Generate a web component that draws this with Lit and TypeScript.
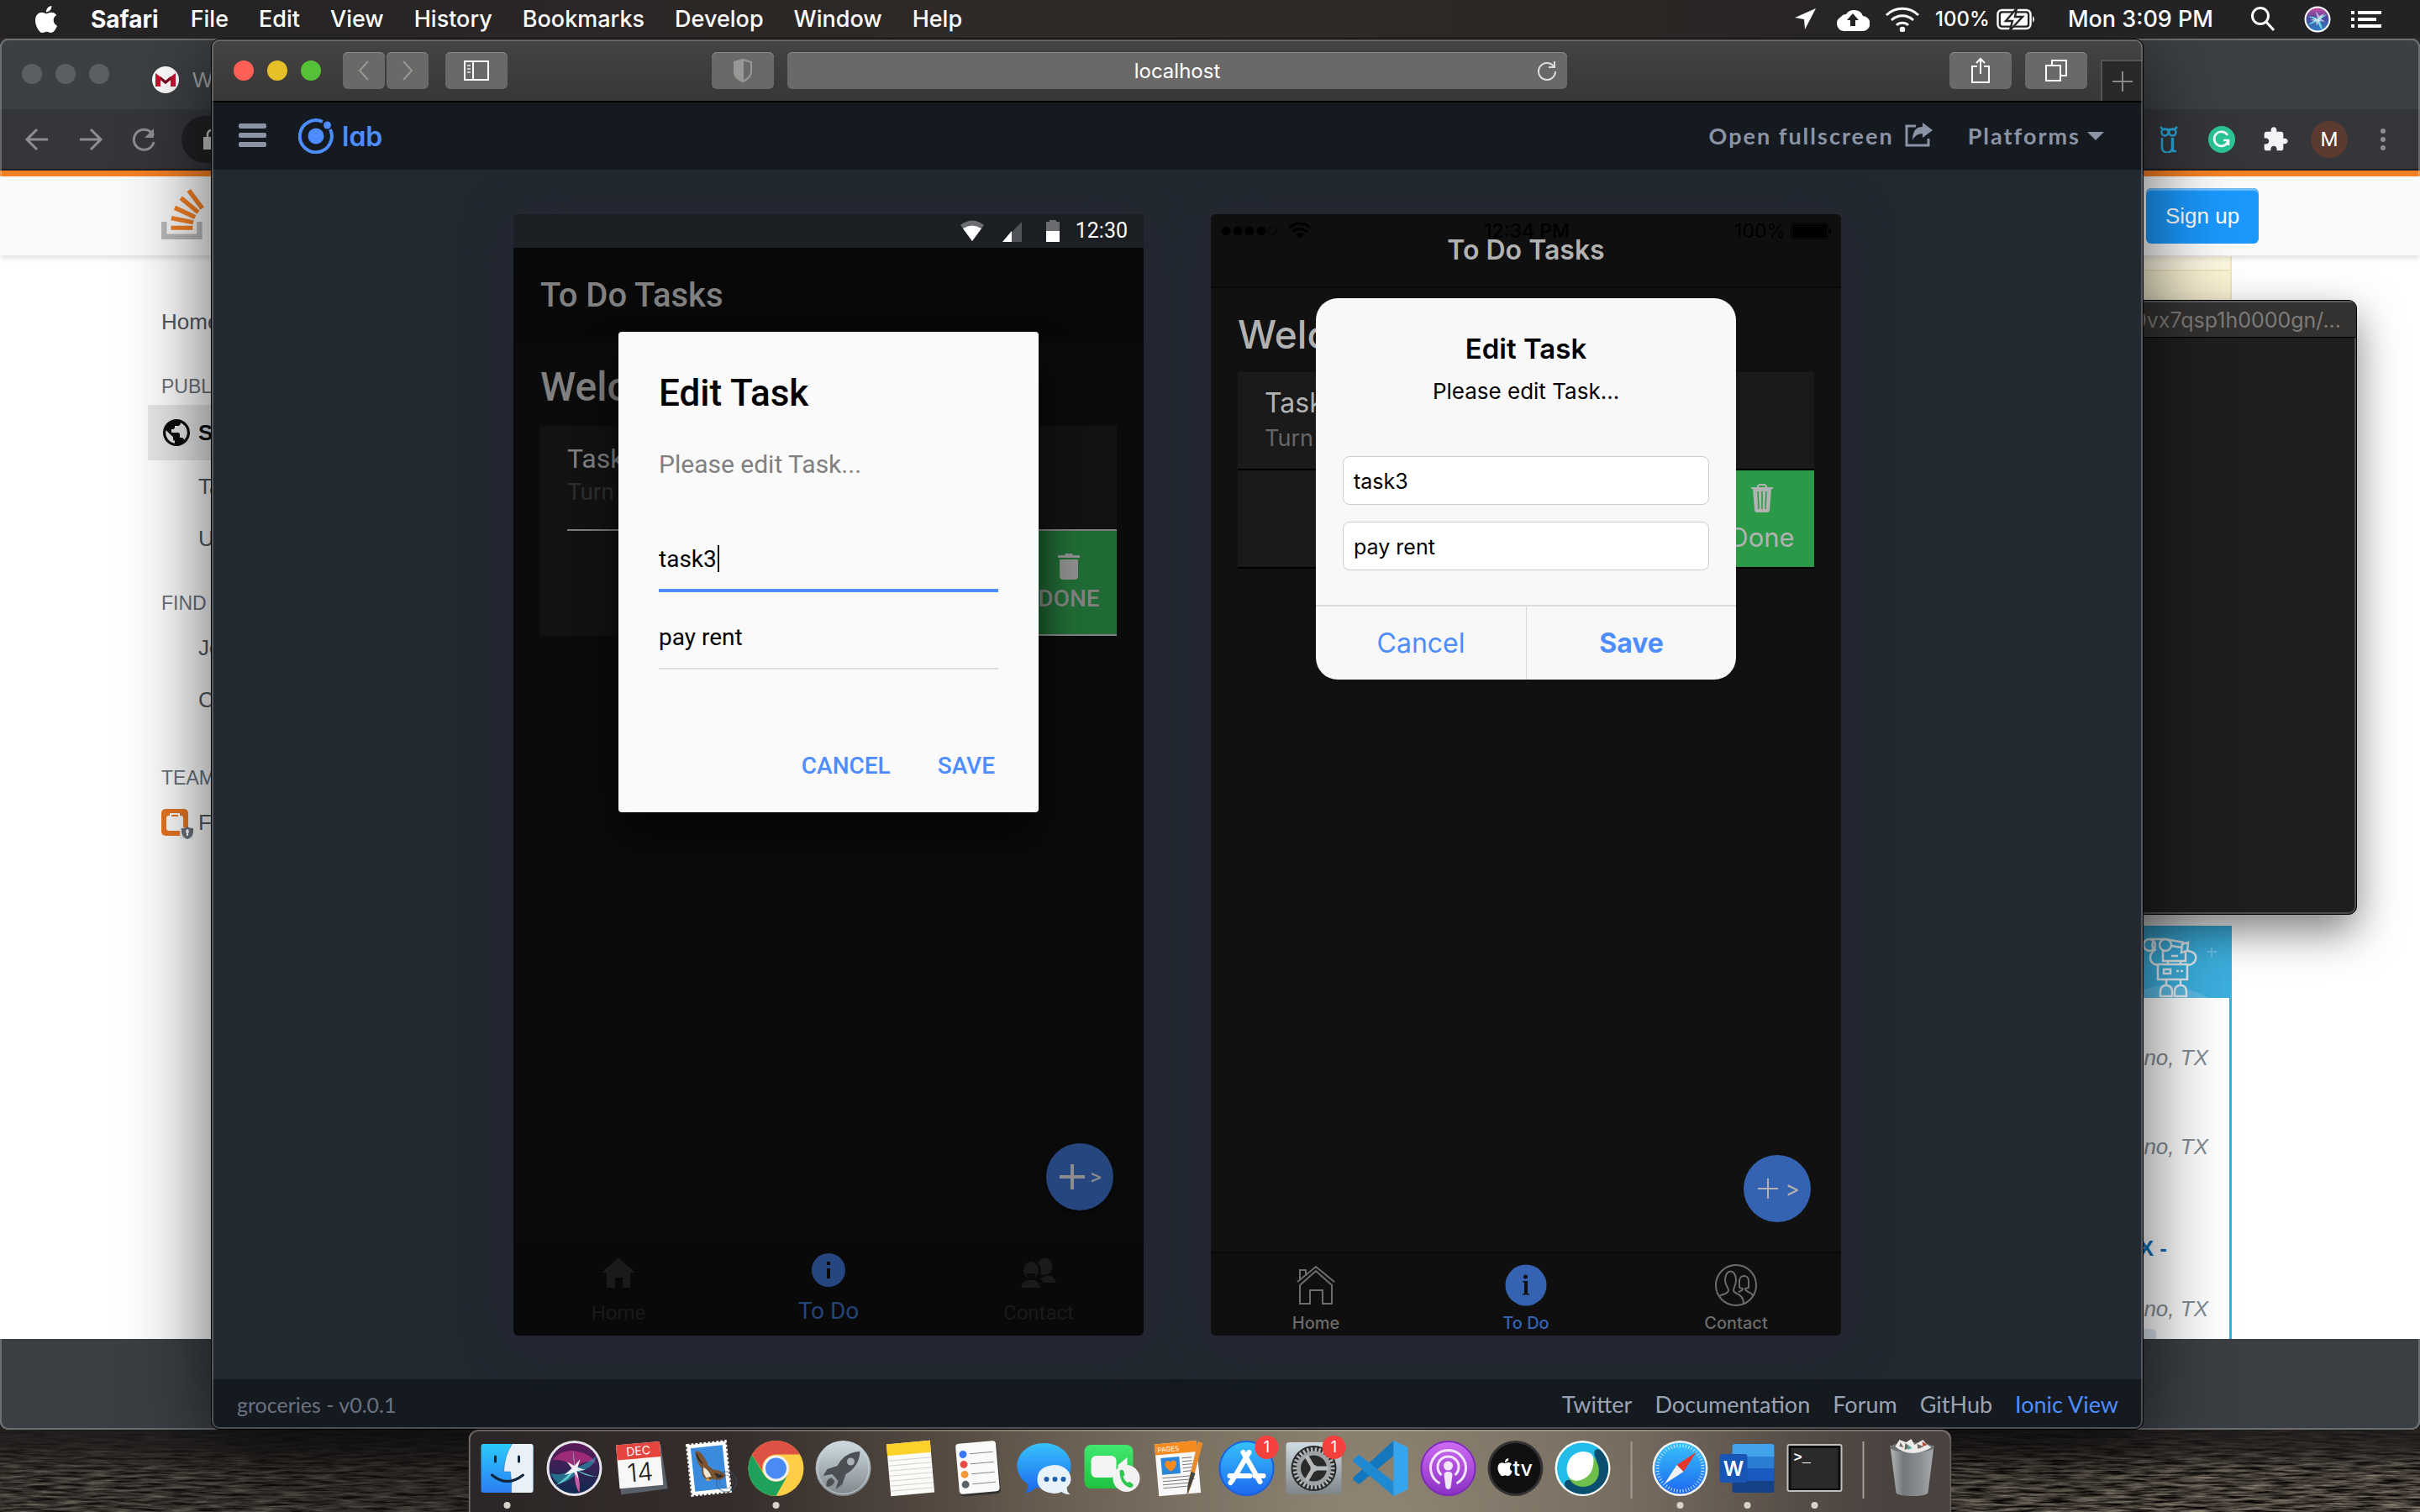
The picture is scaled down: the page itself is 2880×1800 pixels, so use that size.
import { LitElement, html, css, svg, nothing } from "lit";
import { customElement, property } from "lit/decorators.js";

const APPLE_PATH =
  "M12.152 6.896c-.948 0-2.415-1.078-3.96-1.04-2.04.027-3.91 1.183-4.961 3.014-2.117 3.675-.546 9.103 1.519 12.09 1.013 1.454 2.208 3.09 3.792 3.039 1.52-.065 2.09-.987 3.935-.987 1.831 0 2.35.987 3.96.948 1.637-.026 2.676-1.48 3.676-2.948 1.156-1.688 1.636-3.325 1.662-3.415-.039-.013-3.182-1.221-3.22-4.857-.026-3.04 2.48-4.494 2.597-4.559-1.429-2.09-3.623-2.324-4.39-2.376-2-.156-3.675 1.09-4.61 1.09zM15.53 3.83c.843-1.012 1.4-2.427 1.245-3.83-1.207.052-2.662.805-3.532 1.818-.78.896-1.454 2.338-1.273 3.714 1.338.104 2.715-.688 3.559-1.701";

const reset = css`
  *,
  *::before,
  *::after {
    box-sizing: border-box;
  }
  button {
    border: 0;
    padding: 0;
    margin: 0;
    background: none;
    font: inherit;
    letter-spacing: inherit;
    color: inherit;
    display: flex;
    align-items: center;
    justify-content: center;
  }
  a {
    color: inherit;
    text-decoration: none;
  }
  h1,
  h2,
  h3,
  p,
  ul {
    margin: 0;
    padding: 0;
    font-weight: inherit;
    font-size: inherit;
    list-style: none;
  }
  svg {
    display: block;
    flex: none;
  }
`;

/* ---------- Menu bar ---------- */

@customElement("menu-bar")
export class MenuBar extends LitElement {
  static styles = [
    reset,
    css`
      :host {
        display: flex;
        justify-content: space-between;
        align-items: center;
        height: 45px;
        padding: 0 46px 0 39px;
        background: linear-gradient(90deg, #242224, #302a27 45%, #2c2725 65%, #232224 85%);
        color: #fff;
        font: 27px Inter, sans-serif;
        font-weight: 500;
        position: relative;
        z-index: 1;
      }
      .menus,
      .status {
        display: flex;
        align-items: center;
      }
      .menus button {
        padding: 0 18px;
      }
      .menus .apple {
        padding: 0 19px 0 0;
      }
      .menus .app {
        font-size: 28px;
        font-weight: 700;
        padding-right: 20px;
      }
      .status {
        gap: 18px;
      }
      .power {
        display: flex;
        align-items: center;
        gap: 8px;
        font-size: 24px;
      }
      .clock {
        padding: 0 26px 0 20px;
      }
      .find {
        padding-right: 11px;
      }
      .siri {
        margin: 0 6px;
      }
      .send {
        margin-right: 6px;
      }
    `,
  ];
  render() {
    const menus = ["File", "Edit", "View", "History", "Bookmarks", "Develop", "Window", "Help"];
    return html`
      <nav class="menus">
        <button class="apple" aria-label="Apple menu">
          <svg width="32" height="32" viewBox="0 0 24 24" fill="#fff"><path d=${APPLE_PATH} /></svg>
        </button>
        <button class="app">Safari</button>
        ${menus.map((m) => html`<button>${m}</button>`)}
      </nav>
      <div class="status">
        <svg class="send" width="25" height="25" viewBox="0 0 25 25" fill="#fff"><path d="M25 0L12 25l-1-12L0 11z" /></svg>
        <svg width="40" height="28" viewBox="0 0 40 28" fill="#fff">
          <path d="M9 28a9 9 0 0 1-3-17 7 7 0 0 1 6-3 11 10 0 0 1 20 2 9 9 0 0 1-1 18z" />
          <path d="M20 7l7 8h-4v7h-6v-7h-4z" fill="#262324" />
        </svg>
        <svg width="42" height="30" viewBox="0 0 42 30" fill="none" stroke="#fff" stroke-width="3">
          <path d="M2 10a27 27 0 0 1 38 0M8 16a19 19 0 0 1 26 0M14 22a10 10 0 0 1 14 0" />
          <circle cx="21" cy="27" r="1.8" fill="#fff" />
        </svg>
        <span class="power"
          >100%
          <svg width="47" height="26" viewBox="0 0 47 26">
            <rect x="1.5" y="2" width="39" height="22" rx="5" fill="none" stroke="#fff" stroke-width="2.4" />
            <rect x="5" y="5.5" width="32" height="15" rx="2" fill="#fff" />
            <path d="M43 9q4 4 0 8z" fill="#fff" />
            <path d="M24 0L11 15h8l-3 11L31 10h-9z" fill="#fff" stroke="#262324" stroke-width="2.4" />
          </svg>
        </span>
        <span class="clock">Mon 3:09 PM</span>
        <button class="find" aria-label="Search">
          <svg width="29" height="29" viewBox="0 0 29 29" fill="none" stroke="#fff" stroke-width="3">
            <circle cx="12" cy="11" r="9.5" />
            <path d="M19 18l9 10" />
          </svg>
        </button>
        <svg class="siri" width="32" height="32" viewBox="0 0 32 32">
          <defs>
            <linearGradient id="s" x1="0" y1="0" x2="0" y2="1">
              <stop offset="0" stop-color="#d64a9e" />
              <stop offset=".45" stop-color="#4a4a9c" />
              <stop offset="1" stop-color="#2a86c9" />
            </linearGradient>
          </defs>
          <circle cx="16" cy="16" r="14.5" fill="url(#s)" stroke="#fff" stroke-width="2" />
          <path d="M5 13q8-1 11 3 3-4 11-6-5 5-9 6 3 6 4 13-5-5-6-12-3 4-11 5 5-3 9-6-4-1-9-3z" fill="#6fe8ea" opacity=".9" />
          <path d="M16 16l-2-10 4 6 6-3-4 6 5 4-7-1-3 6-1-6-7-1 6-2z" fill="#fff" opacity=".6" />
        </svg>
        <svg width="36" height="22" viewBox="0 0 36 22" fill="#fff">
          <path d="M0 1h4v4H0zM8 1h28v4H8zM0 9h4v4H0zM8 9h22v4H8zM0 17h4v4H0zM8 17h28v4H8z" />
        </svg>
      </div>
    `;
  }
}

/* ---------- Browser window behind ---------- */

@customElement("chrome-window")
export class ChromeWindow extends LitElement {
  static styles = [
    reset,
    css`
      :host {
        display: flex;
        flex-direction: column;
        overflow: hidden;
        border-radius: 10px;
        background: #fff;
        font: 26px "Liberation Sans", sans-serif;
        color: #525960;
      }
      :host::after {
        content: "";
        position: absolute;
        inset: 0;
        border: 2px solid rgba(255, 255, 255, 0.25);
        border-radius: 10px;
        pointer-events: none;
      }
      .tabs {
        height: 84px;
        background: #3c4043;
        display: flex;
        align-items: center;
        padding-left: 26px;
        gap: 16px;
        color: #9aa0a6;
      }
      .light {
        width: 24px;
        height: 24px;
        border-radius: 50%;
        background: #5c5f62;
      }
      .tab {
        display: flex;
        align-items: center;
        gap: 16px;
        padding: 14px 0 0 35px;
      }
      .bar {
        height: 73px;
        background: #35363a;
        border-bottom: 2px solid #202124;
        display: flex;
        align-items: center;
        justify-content: space-between;
        padding: 0 38px 0 28px;
      }
      .group {
        display: flex;
        align-items: center;
        gap: 32px;
      }
      .address {
        width: 400px;
        height: 56px;
        border-radius: 28px;
        background: #202124;
        display: flex;
        align-items: center;
        padding-left: 26px;
        margin-left: -2px;
      }
      .avatar {
        width: 44px;
        height: 44px;
        border-radius: 50%;
        background: #5c3a30;
        color: #fff;
        font: 24px Roboto, sans-serif;
        margin: 0 2px 0 -6px;
      }
      .grammar {
        width: 32px;
        height: 32px;
        border-radius: 50%;
        background: #2bc596;
        margin-left: 4px;
      }
      .top {
        height: 101px;
        border-top: 7px solid #f48024;
        background: #fafafa;
        box-shadow: 0 2px 8px rgba(0, 0, 0, 0.16);
        display: flex;
        align-items: center;
        justify-content: space-between;
        padding: 0 192px;
        position: relative;
      }
      .brand {
        display: flex;
        gap: 8px;
        font-size: 36px;
        color: #222426;
      }
      .brand svg {
        margin-top: -4px;
      }
      .brand span {
        padding-top: 12px;
      }
      .signup {
        width: 134px;
        height: 66px;
        border-radius: 6px;
        background: #1a98fc;
        box-shadow: inset 0 3px 0 #6cbcfd;
        color: #fff;
      }
      .page {
        flex: 1;
        min-height: 0;
        overflow: hidden;
        display: flex;
        justify-content: space-between;
        padding: 1px 224px 0 176px;
      }
      nav {
        width: 320px;
        padding-top: 47px;
      }
      .link {
        display: flex;
        align-items: center;
        height: 62px;
        padding-left: 60px;
      }
      .home {
        padding-left: 16px;
      }
      .icon {
        gap: 6px;
        padding-left: 16px;
      }
      .on {
        height: 66px;
        background: #e6e8ea;
        color: #0c0d0e;
        font-weight: 700;
        gap: 8px;
      }
      .label {
        height: 36px;
        line-height: 36px;
        padding-left: 16px;
        margin: 28px 0 4px;
        font-size: 23px;
        color: #6a737c;
      }
      .label.far {
        margin-top: 44px;
      }
      aside {
        width: 300px;
      }
      .note {
        height: 200px;
        border-right: 2px solid #f1e5bc;
        background: linear-gradient(#fdf7e2 16px, #f1e5bc 16px, #f1e5bc 18px, #fbf3d5 18px);
      }
      .jobs {
        margin-top: 597px;
        height: 520px;
        border-right: 3px solid #3cafde;
        color: #848d95;
        text-align: right;
        line-height: 38px;
      }
      .hero {
        height: 86px;
        margin-right: -3px;
        background: #3cafde;
        display: flex;
        justify-content: flex-end;
        align-items: flex-end;
      }
      .jobs p {
        padding-right: 25px;
        margin-top: 68px;
        font-style: italic;
      }
      .jobs .first {
        margin-top: 52px;
      }
      .jobs .after {
        margin-top: 34px;
      }
      .jobs .role {
        margin-top: 83px;
        padding-right: 74px;
        font-style: normal;
        font-weight: 700;
        color: #0f70b8;
      }
      .chip {
        width: 80px;
        height: 40px;
        margin: 5px 87px 0 auto;
        border-radius: 6px;
        background: #dbe5ee;
      }
      .foot {
        height: 108px;
        background: #3b3f43;
      }
    `,
  ];
  render() {
    return html`
      <div class="tabs">
        <i class="light"></i><i class="light"></i><i class="light"></i>
        <div class="tab">
          <svg width="32" height="32" viewBox="0 0 32 32">
            <circle cx="16" cy="16" r="16" fill="#fff" />
            <path d="M4 8l12 9L28 8v16h-6V16l-6 5-6-5v8H4z" fill="#c4122f" />
            <path d="M10 12l6 5 6-5v4l-6 5-6-5z" fill="#7c0d20" />
          </svg>
          <span>Work</span>
        </div>
      </div>
      <div class="bar">
        <div class="group">
          <svg width="32" height="32" viewBox="0 0 32 32" fill="none" stroke="#8c8e91" stroke-width="3">
            <path d="M29 16H4M16 4L4 16l12 12" />
          </svg>
          <svg width="32" height="32" viewBox="0 0 32 32" fill="none" stroke="#8c8e91" stroke-width="3">
            <path d="M3 16h25M16 4l12 12-12 12" />
          </svg>
          <svg width="30" height="32" viewBox="0 0 30 32" fill="none" stroke="#8c8e91" stroke-width="3">
            <path d="M27 19a12 12 0 1 1-3-11l3 3" />
            <path d="M27 3v11H16z" fill="#8c8e91" stroke="none" />
          </svg>
          <div class="address">
            <svg width="20" height="24" viewBox="0 0 20 24" fill="#c8c9cb">
              <path d="M0 9h20v15H0z" />
              <path d="M5 10V6a5 5 0 0 1 10 0v4" fill="none" stroke="#c8c9cb" stroke-width="2.5" />
            </svg>
          </div>
        </div>
        <div class="group">
          <svg width="22" height="32" viewBox="0 0 22 32" fill="none" stroke="#29a9dc" stroke-width="2.5">
            <path d="M3 14v10a6 6 0 0 0 12 3V14M16 14v16h4M1 1l3 3h14l3-3" />
            <circle cx="6.5" cy="7.5" r="4" />
            <circle cx="15.5" cy="7.5" r="4" />
          </svg>
          <span class="grammar">
            <svg width="32" height="32" viewBox="0 0 32 32" fill="none" stroke="#fff" stroke-width="2.6">
              <path d="M23 11a8.500 8.500 0 1 0 1 6h-6M24 17v6" />
            </svg>
          </span>
          <svg width="32" height="32" viewBox="0 0 24 24" fill="#f1f3f4">
            <path
              d="M20.500 11H19V7c0-1.100-.9-2-2-2h-4V3.500C13 2.120 11.880 1 10.500 1S8 2.120 8 3.500V5H4c-1.100 0-1.990.9-1.990 2v3.800H3.500c1.490 0 2.700 1.210 2.700 2.700s-1.210 2.700-2.700 2.700H2V20c0 1.100.9 2 2 2h3.800v-1.500c0-1.490 1.210-2.700 2.700-2.700 1.490 0 2.700 1.210 2.700 2.700V22H17c1.100 0 2-.9 2-2v-4h1.500c1.380 0 2.500-1.120 2.500-2.500S21.880 11 20.500 11z"
            />
          </svg>
          <button class="avatar">M</button>
          <svg width="14" height="28" viewBox="0 0 14 28" fill="#8c8e91">
            <circle cx="8" cy="4" r="3" />
            <circle cx="8" cy="14" r="3" />
            <circle cx="8" cy="24" r="3" />
          </svg>
        </div>
      </div>
      <div class="top">
        <div class="brand">
          <svg width="52" height="60" viewBox="0 0 32 37">
            <path d="M26 33v-9h4v13H0V24h4v9h22z" fill="#bcbbbb" />
            <path
              d="M21.500 0l-2.700 2 9.900 13.300 2.700-2L21.500 0zM26 18.400L13.300 7.800l2.100-2.500 12.700 10.600-2.100 2.500zM9.100 15.200l15 7 1.400-3-15-7-1.400 3zm14 10.790l.68-2.950-16.100-3.350L7 23l16.100 2.990zM23 30H7v-3h16v3z"
              fill="#f48024"
            />
          </svg>
          <span>stack</span>
        </div>
        <button class="signup">Sign up</button>
      </div>
      <div class="page">
        <nav>
          <a class="link home" href="#home">Home</a>
          <p class="label">PUBLIC</p>
          <a class="link icon on" href="#so">
            <svg width="36" height="36" viewBox="0 0 18 18" fill="#0c0d0e">
              <path
                d="M9 1a8 8 0 100 16A8 8 0 009 1zM8 15.320a6.400 6.400 0 01-5.230-7.750L7 11.680v.8c0 .88.12 1.320 1 1.320v1.520zm5.720-2c-.2-.66-1-1.320-1.720-1.320h-1v-2c0-.44-.56-1-1-1H6V7h1c.44 0 1-.56 1-1V5h2c.88 0 1.400-.72 1.400-1.600v-.33a6.400 6.400 0 012.320 10.240z"
              />
            </svg>
            Stack Overflow</a
          >
          <a class="link" href="#tags">Tags</a>
          <a class="link" href="#users">Users</a>
          <p class="label">FIND A JOB</p>
          <a class="link" href="#jobs">Jobs</a>
          <a class="link" href="#companies">Companies</a>
          <p class="label far">TEAMS</p>
          <a class="link icon" href="#teams">
            <svg width="38" height="40" viewBox="0 0 38 40">
              <rect y="4" width="32" height="32" rx="5" fill="#e87722" />
              <path d="M6 15q0-3 3-3h1V9h12v3h1q3 0 3 3v12q0 3-3 3H9q-3 0-3-3z" fill="#fff" />
              <path d="M12 11h8v2h-8z" fill="#e87722" />
              <path d="M22 26h16v16H22z" fill="#efefef" />
              <path d="M24 27q5 0 7-2 2 2 7 2v5q-1 6-7 8-6-2-7-8z" fill="#6a737c" />
              <path d="M31 28a3 3 0 0 1 1 5v3h-2v-3a3 3 0 0 1 1-5z" fill="#fff" />
            </svg>
            Free</a
          >
        </nav>
        <aside>
          <div class="note"></div>
          <div class="jobs">
            <div class="hero">
              <svg width="106" height="86" viewBox="0 0 106 86" fill="none" stroke="#e6eef2" stroke-width="2.5">
                <path d="M0 76q40-12 78 10H0z" fill="#5bbbe3" stroke="none" />
                <circle cx="8" cy="23" r="7" />
                <circle cx="27" cy="23" r="7" />
                <path d="M13 17q-3 6 0 12M8 16h19M27 16l22 4M47 22l7-2-1 10-7 2zM34 24l13 2" />
                <path
                  d="M16 28q-8 4-7 12 2 6 9 7M54 30q11 2 9 10-2 7-11 7M24 30v12h27V32M34 36h8M30 42v4M45 42v4M18 46h35v18H18zM25 52h8v5h-8zM40 54h3M45 54h3M28 64v7M45 64v7M21 84V79q0-8 7-8t7 8v5zM38 84V79q0-8 7-8t7 8v5z"
                />
                <path d="M82 26v11M77 31h11" stroke="#6cc1e6" stroke-width="2" />
              </svg>
            </div>
            <p class="first">Plano, TX</p>
            <p>Plano, TX</p>
            <p class="role">TX -</p>
            <p class="after">Plano, TX</p>
            <div class="chip"></div>
          </div>
        </aside>
      </div>
      <div class="foot"></div>
    `;
  }
}

/* ---------- Phone previews ---------- */

@customElement("android-phone")
export class AndroidPhone extends LitElement {
  static styles = [
    reset,
    css`
      :host {
        display: flex;
        flex-direction: column;
        position: relative;
        border-radius: 6px;
        overflow: hidden;
        background: #0b0b0b;
        font: 28px Roboto, sans-serif;
        color: #808080;
      }
      .status {
        height: 40px;
        background: #1b1e23;
        color: #fff;
        display: flex;
        align-items: center;
        justify-content: flex-end;
        padding-right: 19px;
        font-size: 25px;
        line-height: 42px;
      }
      .status svg {
        margin-right: 19px;
      }
      .title {
        height: 112px;
        line-height: 114px;
        padding-left: 32px;
        background: #080808;
        font-size: 40px;
        font-weight: 500;
      }
      .content {
        flex: 1;
        padding: 22px 32px 0;
        position: relative;
      }
      .welcome {
        height: 78px;
        line-height: 64px;
        font-size: 48px;
        font-weight: 500;
      }
      .row {
        height: 125px;
        background: #121212;
        display: flex;
        justify-content: flex-end;
      }
      .text {
        flex: 1;
        margin-left: 32px;
        padding-top: 19px;
        border-bottom: 2px solid #7c7c7c;
      }
      .text h3 {
        font-size: 32px;
        line-height: 40px;
      }
      .text p {
        line-height: 40px;
        color: #2e2e2e;
      }
      .done {
        width: 132px;
        flex-direction: column;
        gap: 6px;
        padding-left: 18px;
        background: linear-gradient(90deg, #185128, #206b35 60%);
        border-bottom: 2px solid #808080;
        font-weight: 500;
      }
      .fab {
        position: absolute;
        right: 36px;
        bottom: 37px;
        width: 80px;
        height: 80px;
        border-radius: 50%;
        background: #26467f;
        color: #8c8c8c;
        gap: 6px;
        padding-left: 2px;
        font-size: 26px;
        box-shadow: 0 4px 10px rgba(0, 0, 0, 0.5);
      }
      .tabbar {
        height: 112px;
        background: #090909;
        display: grid;
        grid-template-columns: repeat(3, 1fr);
        color: #1a1a1a;
        font-size: 24px;
      }
      .tabbar button {
        flex-direction: column;
        gap: 10px;
        justify-content: flex-start;
        padding-top: 13px;
      }
      .tabbar span {
        line-height: 36px;
      }
      .tabbar .on {
        color: #254478;
        font-size: 28px;
        padding-top: 11px;
      }
      .dialog {
        position: absolute;
        top: 140px;
        left: 0;
        right: 0;
        width: 500px;
        margin: 0 auto;
        padding: 45px 48px 20px;
        border-radius: 4px;
        background: #fafafa;
        box-shadow: 0 32px 48px rgba(0, 0, 0, 0.6);
        display: flex;
        flex-direction: column;
        color: #000;
      }
      .dialog h2 {
        font-size: 44px;
        line-height: 56px;
        font-weight: 500;
      }
      .dialog p {
        font-size: 30px;
        line-height: 40px;
        margin: 37px 0 56px;
        color: #808080;
      }
      .dialog label {
        display: flex;
        margin-bottom: 14px;
        position: relative;
      }
      input {
        width: 100%;
        height: 78px;
        border: 0;
        border-bottom: 2px solid #dedede;
        padding: 3px 0 0;
        background: none;
        font: inherit;
        color: inherit;
        outline: 0;
      }
      .focus input {
        height: 76px;
        padding: 0;
        border-bottom: 4px solid #4d8dff;
      }
      .caret {
        position: absolute;
        left: 70px;
        top: 20px;
        width: 2px;
        height: 32px;
        background: #000;
      }
      .actions {
        display: flex;
        justify-content: flex-end;
        gap: 16px;
        margin: 64px -16px 0 0;
        color: #4d8dff;
        font-weight: 500;
      }
      .actions button {
        height: 72px;
        padding: 0 20px;
      }
    `,
  ];
  render() {
    return html`
      <div class="status">
        <svg width="118" height="28" viewBox="0 0 118 28">
          <path d="M0 7Q14-4 28 7L14 26z" fill="#6a6c70" />
          <path d="M3 11Q14 4 25 11L14 26z" fill="#fff" />
          <path d="M73 3v24H50z" fill="#505357" />
          <path d="M61 14v13H50z" fill="#fff" />
          <path d="M102 3h4V1h8v2h4v13h-16z" fill="#6a6c70" />
          <path d="M102 14h16v13h-16z" fill="#fff" />
        </svg>
        12:30
      </div>
      <h1 class="title">To Do Tasks</h1>
      <div class="content">
        <h2 class="welcome">Welcome</h2>
        <div class="row">
          <div class="text">
            <h3>Task1</h3>
            <p>Turn in</p>
          </div>
        </div>
        <div class="row">
          <button class="done">
            <svg width="26" height="32" viewBox="0 0 26 32" fill="#8c8c8c">
              <path d="M0 3h8l1-2h8l1 2h8v3H0zM2 8h22v20q0 4-4 4H6q-4 0-4-4z" />
            </svg>
            DONE
          </button>
        </div>
        <button class="fab" aria-label="Add">
          <svg width="30" height="30" viewBox="0 0 30 30" fill="#8c8c8c">
            <path d="M13 0h4v13h13v4H17v13h-4V17H0v-4h13z" />
          </svg>
          &gt;
        </button>
      </div>
      <nav class="tabbar">
        <button>
          <svg width="44" height="44" viewBox="0 0 44 44" fill="#1a1a1a">
            <path d="M22 6l20 18h-6v18h-9V30h-9v12H8V24H2z" />
          </svg>
          <span>Home</span>
        </button>
        <button class="on">
          <svg width="44" height="44" viewBox="0 0 44 44">
            <circle cx="22" cy="23" r="20" fill="#26467f" />
            <path d="M20 13h4v4h-4zM20 21h4v12h-4z" fill="#090909" />
          </svg>
          <span>To Do</span>
        </button>
        <button>
          <svg width="46" height="44" viewBox="0 0 46 44" fill="#1a1a1a">
            <path d="M24 42H2q2-8 8-9h8q5 1 7 9z" />
            <ellipse cx="14" cy="21" rx="9" ry="10" />
            <path d="M8 25h12q-2 6-6 6t-6-6z" fill="#090909" />
            <path d="M26 8a9 10 0 1 1-1 17q2-7-3-13zM29 36l-4-5q7-4 13-3 5 3 6 8z" />
          </svg>
          <span>Contact</span>
        </button>
      </nav>
      <section class="dialog" role="dialog" aria-label="Edit Task">
        <h2>Edit Task</h2>
        <p>Please edit Task...</p>
        <label class="focus"><input aria-label="Task" .value=${"task3"} /><i class="caret"></i></label>
        <label><input aria-label="Detail" .value=${"pay rent"} /></label>
        <div class="actions"><button>CANCEL</button><button>SAVE</button></div>
      </section>
    `;
  }
}

@customElement("ios-phone")
export class IosPhone extends LitElement {
  static styles = [
    reset,
    css`
      :host {
        display: flex;
        flex-direction: column;
        position: relative;
        border-radius: 6px;
        overflow: hidden;
        background: #111;
        font: 32px Inter, sans-serif;
        color: #b2b2b2;
      }
      .head {
        height: 88px;
        background: #0f0f0f;
        border-bottom: 2px solid #0a0a0a;
      }
      .status {
        height: 28px;
        padding: 10px 10px 0 12px;
        display: grid;
        grid-template-columns: 1fr auto 1fr;
        align-items: center;
        color: #000;
        font-size: 23px;
        line-height: 20px;
      }
      .status b {
        font-weight: 500;
      }
      .battery {
        display: flex;
        justify-content: flex-end;
        gap: 6px;
      }
      .title {
        text-align: center;
        font-size: 32px;
        line-height: 30px;
        font-weight: 600;
        position: relative;
      }
      .content {
        flex: 1;
        padding: 24px 32px 0;
        position: relative;
      }
      .welcome {
        height: 76px;
        line-height: 62px;
        font-size: 46px;
        font-weight: 500;
      }
      .row {
        height: 117px;
        background: #1a1a1a;
        border-bottom: 2px solid #000;
        display: flex;
        justify-content: flex-end;
      }
      .text {
        flex: 1;
        padding: 16px 0 0 32px;
      }
      .text h3 {
        line-height: 42px;
      }
      .text p {
        font-size: 27px;
        line-height: 42px;
        color: #666;
      }
      .done {
        width: 124px;
        flex-direction: column;
        gap: 10px;
        background: #2b9a48;
        font-size: 31px;
        line-height: 40px;
      }
      .fab {
        position: absolute;
        right: 36px;
        bottom: 35px;
        width: 80px;
        height: 80px;
        border-radius: 50%;
        background: #3563b2;
        gap: 8px;
        font-size: 26px;
        padding-left: 4px;
      }
      .tabbar {
        height: 100px;
        background: #0f0f0f;
        border-top: 2px solid #090909;
        display: grid;
        grid-template-columns: repeat(3, 1fr);
        color: #6c6c6c;
        font-size: 20px;
        font-weight: 500;
      }
      .tabbar button {
        flex-direction: column;
        justify-content: flex-start;
        gap: 8px;
        padding-top: 13px;
      }
      .tabbar .on {
        color: #3563b2;
      }
      .dialog {
        position: absolute;
        top: 100px;
        left: 0;
        right: 0;
        width: 500px;
        margin: 0 auto;
        border-radius: 26px;
        background: #f8f8f8;
        color: #000;
        text-align: center;
        overflow: hidden;
      }
      .dialog h2 {
        margin-top: 38px;
        font-size: 33px;
        line-height: 44px;
        font-weight: 600;
      }
      .dialog p {
        margin: 11px 0 59px;
        font-size: 26px;
        line-height: 36px;
      }
      .fields {
        display: flex;
        flex-direction: column;
        gap: 20px;
        padding: 0 32px 41px;
      }
      input {
        width: 100%;
        height: 58px;
        padding: 2px 12px 0;
        border: 1px solid #ccc;
        border-radius: 8px;
        background: #fff;
        font: 25px Inter, sans-serif;
        color: #000;
      }
      .actions {
        display: grid;
        grid-template-columns: 1fr 1fr;
        border-top: 2px solid #dbdbdf;
        color: #4d8dff;
        font-size: 32px;
      }
      .actions button {
        height: 87px;
      }
      .actions .save {
        border-left: 1px solid #dbdbdf;
        font-weight: 700;
      }
    `,
  ];
  render() {
    return html`
      <header class="head">
        <div class="status">
          <svg width="106" height="20" viewBox="0 0 106 20">
            <circle cx="6" cy="10" r="5.5" /><circle cx="20" cy="10" r="5.5" /><circle cx="34" cy="10" r="5.5" />
            <circle cx="48" cy="10" r="5.5" />
            <circle cx="61" cy="10" r="5" fill="none" stroke="#000" />
            <path d="M81 6q13-10 26 0M85 11q9-7 18 0" fill="none" stroke="#000" stroke-width="3" />
            <path d="M89 14q5-4 10 0l-5 5z" />
          </svg>
          <b>12:34 PM</b>
          <span class="battery"
            >100%
            <svg width="50" height="20" viewBox="0 0 50 20">
              <rect x=".5" y=".5" width="44" height="19" rx="3" fill="none" stroke="#000" />
              <rect x="2" y="2" width="41" height="16" rx="2" />
              <path d="M46 6q4 4 0 8z" />
            </svg>
          </span>
        </div>
        <h1 class="title">To Do Tasks</h1>
      </header>
      <div class="content">
        <h2 class="welcome">Welcome</h2>
        <div class="row">
          <div class="text">
            <h3>Task1</h3>
            <p>Turn in</p>
          </div>
        </div>
        <div class="row">
          <button class="done">
            <svg width="26" height="34" viewBox="0 0 26 34" fill="#b2b2b2">
              <path d="M8 4q0-3 3-3h4q3 0 3 3" fill="none" stroke="#b2b2b2" stroke-width="2" />
              <path d="M0 4h26v2h-2l-2 25q0 3-3 3H7q-3 0-3-3L2 6H0z" />
              <path d="M8 9l1 21M13 9v21M18 9l-1 21" stroke="#2b9a48" stroke-width="1.5" />
            </svg>
            Done
          </button>
        </div>
        <button class="fab" aria-label="Add">
          <svg width="24" height="24" viewBox="0 0 24 24" fill="#b2b2b2">
            <path d="M11 0h2v11h11v2H13v11h-2V13H0v-2h11z" />
          </svg>
          &gt;
        </button>
      </div>
      <nav class="tabbar">
        <button>
          <svg width="50" height="50" viewBox="0 0 50 50" fill="none" stroke="#6c6c6c" stroke-width="2">
            <path d="M3 21L25 3l22 18M6 25L25 8l19 17v22H33V31H18v16H6zM6 18V7h7v5" />
          </svg>
          Home
        </button>
        <button class="on">
          <svg width="50" height="50" viewBox="0 0 50 50">
            <circle cx="25" cy="25" r="24.5" fill="#3563b2" />
            <circle cx="24.5" cy="15" r="2.5" fill="#0f0f0f" />
            <path d="M21 20h6v15h2v1.500h-8V35h2V21.500h-2z" fill="#0f0f0f" />
          </svg>
          To Do
        </button>
        <button>
          <svg width="50" height="50" viewBox="0 0 50 50" fill="none" stroke="#6c6c6c" stroke-width="2">
            <circle cx="25" cy="25" r="24" />
            <path d="M5 38c4-3 11-2 11-7 0-3-4-6-4-12 0-14 13-14 13 0 0 6-3 9-3 12 0 5 12 3 12 16M29 28V20c0-8 11-8 11 0v8l-4 1c0 5 8 3 9 9M29 28l4 1c0 3-3 3-5 4" />
          </svg>
          Contact
        </button>
      </nav>
      <section class="dialog" role="dialog" aria-label="Edit Task">
        <h2>Edit Task</h2>
        <p>Please edit Task...</p>
        <div class="fields">
          <input aria-label="Task" .value=${"task3"} />
          <input aria-label="Detail" .value=${"pay rent"} />
        </div>
        <div class="actions"><button>Cancel</button><button class="save">Save</button></div>
      </section>
    `;
  }
}

/* ---------- Front browser window ---------- */

@customElement("safari-window")
export class SafariWindow extends LitElement {
  static styles = [
    reset,
    css`
      :host {
        display: flex;
        flex-direction: column;
        overflow: hidden;
        border: 1px solid #000;
        border-radius: 10px;
        background: #232931;
        box-shadow: 0 24px 100px rgba(0, 0, 0, 0.65);
        font: 27px Lato, sans-serif;
      }
      :host::after {
        content: "";
        position: absolute;
        inset: 0;
        border: 2px solid rgba(160, 160, 160, 0.4);
        border-radius: 9px;
        pointer-events: none;
      }
      .toolbar {
        height: 75px;
        background: linear-gradient(#454442, #383735);
        border-bottom: 2px solid #000;
        display: flex;
        align-items: center;
        padding-left: 26px;
      }
      .lights {
        display: flex;
        gap: 16px;
        margin-right: 26px;
      }
      .light {
        width: 24px;
        height: 24px;
        border-radius: 50%;
        background: #ff5f57;
      }
      .light.min {
        background: #e6c029;
      }
      .light.max {
        background: #56c038;
      }
      .tool {
        width: 74px;
        height: 44px;
        border-radius: 6px;
        background: #6a6967;
        box-shadow: inset 0 1px 0 #8a8988;
      }
      .tool.small {
        width: 50px;
        margin-right: 2px;
      }
      .side {
        margin-left: 18px;
      }
      .center {
        flex: 1;
        display: flex;
        gap: 16px;
        margin: 0 455px 0 243px;
      }
      .url {
        flex: 1;
        display: flex;
        align-items: center;
        height: 44px;
        padding: 0 12px 0 36px;
        border-radius: 6px;
        background: #6a6967;
        box-shadow: inset 0 1px 0 #8a8988;
      }
      .url input {
        flex: 1;
        min-width: 0;
        border: 0;
        padding: 2px 0 0;
        background: none;
        color: #fff;
        text-align: center;
        font: 24px Inter, sans-serif;
      }
      .right {
        display: flex;
        align-items: center;
        align-self: stretch;
        gap: 16px;
      }
      .plus {
        width: 50px;
        height: 49px;
        align-self: flex-end;
        background: #2a2928;
        border-left: 2px solid #555;
        border-top: 2px solid #555;
      }
      .lab {
        height: 80px;
        background: #151a21;
        display: flex;
        align-items: center;
        justify-content: space-between;
        padding: 0 46px 0 32px;
        color: #8b94a5;
        font-weight: 700;
      }
      .brand,
      .options {
        display: flex;
        align-items: center;
      }
      .logo {
        margin: 0 10px 0 38px;
      }
      .brand span {
        color: #4d8dff;
        font: 600 32px Inter, sans-serif;
        font-feature-settings: "cv11";
      }
      .options {
        gap: 42px;
        letter-spacing: 2px;
      }
      .options button {
        gap: 12px;
        padding-bottom: 2px;
      }
      .options .drop {
        gap: 8px;
      }
      .stage {
        flex: 1;
        display: flex;
        justify-content: center;
        gap: 80px;
        padding: 53px 40px 52px;
      }
      .phone {
        flex: 0 1 750px;
        box-shadow: 0 8px 60px rgba(34, 36, 50, 0.9);
      }
      footer {
        height: 59px;
        background: #151a21;
        display: flex;
        align-items: center;
        justify-content: space-between;
        padding: 0 29px 0 30px;
        color: #9aa3b4;
      }
      footer span {
        font-size: 25px;
        color: #6a7280;
      }
      .links {
        display: flex;
        gap: 27px;
      }
      .links .on {
        color: #4d8dff;
      }
    `,
  ];
  render() {
    return html`
      <div class="toolbar">
        <div class="lights"><i class="light"></i><i class="light min"></i><i class="light max"></i></div>
        <button class="tool small" aria-label="Back">
          <svg width="14" height="24" viewBox="0 0 14 24" fill="none" stroke="#989795" stroke-width="2"><path d="M12 1L2 12l10 11" /></svg>
        </button>
        <button class="tool small" aria-label="Forward">
          <svg width="14" height="24" viewBox="0 0 14 24" fill="none" stroke="#989795" stroke-width="2"><path d="M2 1l10 11L2 23" /></svg>
        </button>
        <button class="tool side" aria-label="Sidebar">
          <svg width="30" height="24" viewBox="0 0 30 24" fill="none" stroke="#fff" stroke-width="2">
            <rect x="1" y="1" width="28" height="22" />
            <path d="M11 1v22" />
            <path d="M4 6h4M4 10h4M4 14h4" stroke="#ccc" />
          </svg>
        </button>
        <div class="center">
          <button class="tool" aria-label="Privacy report">
            <svg width="22" height="28" viewBox="0 0 22 28" fill="none" stroke="#989795" stroke-width="2">
              <path d="M11 1l10 3v12q-1 7-10 11Q2 23 1 16V4z" />
              <path d="M11 1v26Q2 23 1 16V4z" fill="#989795" />
            </svg>
          </button>
          <div class="url">
            <input aria-label="Address" .value=${"localhost"} />
            <svg width="24" height="26" viewBox="0 0 24 26" fill="none" stroke="#dcdcdc" stroke-width="2">
              <path d="M20 8a10 10 0 1 0 2 6" />
              <path d="M21 2v7h-7" />
            </svg>
          </div>
        </div>
        <div class="right">
          <button class="tool" aria-label="Share">
            <svg width="24" height="32" viewBox="0 0 24 32" fill="none" stroke="#fff" stroke-width="2">
              <path d="M8 11H2v19h20V11h-6M12 20V2M7 7l5-5 5 5" />
            </svg>
          </button>
          <button class="tool" aria-label="Tab overview">
            <svg width="26" height="26" viewBox="0 0 26 26" fill="none" stroke="#fff" stroke-width="2">
              <path d="M1 7h17v18H1zM8 7V1h17v18h-7" />
            </svg>
          </button>
          <button class="plus" aria-label="New tab">
            <svg width="24" height="24" viewBox="0 0 24 24" stroke="#8a8988" stroke-width="2"><path d="M12 0v24M0 12h24" /></svg>
          </button>
        </div>
      </div>
      <header class="lab">
        <div class="brand">
          <button aria-label="Menu">
            <svg width="33" height="30" viewBox="0 0 33 30" fill="#8b94a5">
              <rect width="33" height="6" rx="2" /><rect y="11" width="33" height="6" rx="2" /><rect y="22" width="33" height="6" rx="2" />
            </svg>
          </button>
          <svg class="logo" width="42" height="42" viewBox="0 0 42 42">
            <path d="M29 4A19 19 0 1 0 38 13" fill="none" stroke="#4d8dff" stroke-width="4" />
            <circle cx="21" cy="21" r="9.5" fill="#4d8dff" />
            <circle cx="34.5" cy="8" r="4.5" fill="#4d8dff" />
          </svg>
          <span>lab</span>
        </div>
        <div class="options">
          <button>
            Open fullscreen
            <svg width="34" height="30" viewBox="0 0 34 30" fill="#8b94a5">
              <path d="M14 4H3v23h26v-8" fill="none" stroke="#8b94a5" stroke-width="3" />
              <path d="M22 0l12 9-12 9v-5q-8 0-12 8 0-16 12-16z" />
            </svg>
          </button>
          <button class="drop">
            Platforms
            <svg width="20" height="12" viewBox="0 0 20 12" fill="#8b94a5"><path d="M0 2h20L10 12z" /></svg>
          </button>
        </div>
      </header>
      <main class="stage">
        <android-phone class="phone"></android-phone>
        <ios-phone class="phone"></ios-phone>
      </main>
      <footer>
        <span>groceries - v0.0.1</span>
        <nav class="links">
          <a href="#twitter">Twitter</a><a href="#docs">Documentation</a><a href="#forum">Forum</a
          ><a href="#github">GitHub</a><a class="on" href="#view">Ionic View</a>
        </nav>
      </footer>
    `;
  }
}

/* ---------- Dock ---------- */

interface DockApp {
  name: string;
  art: unknown;
  running?: boolean;
  badge?: string;
}

const teeth = (count: number, r1: number, r2: number, color: string, width: number) =>
  Array.from({ length: count }, (_, i) => {
    const a = (i / count) * Math.PI * 2;
    return svg`<line x1=${36 + Math.cos(a) * r1} y1=${36 + Math.sin(a) * r1} x2=${36 + Math.cos(a) * r2} y2=${36 + Math.sin(a) * r2} stroke=${color} stroke-width=${width} />`;
  });

const apps: DockApp[] = [
  {
    name: "Finder",
    running: true,
    art: svg`
      <rect x="5" y="7" width="62" height="58" rx="3" fill="url(#finder)" />
      <path d="M42 7h22q3 0 3 3v52q0 3-3 3H41q1-12-1-25h-8q1-20 10-33z" fill="#e9f0f8" />
      <path d="M42 7q-9 13-10 33h8q2 13 1 25" fill="none" stroke="#1c6fc2" stroke-width="1" opacity=".5" />
      <path d="M22 22v6M50 22v6M18 44q18 15 37 0" fill="none" stroke="#10243a" stroke-width="3" stroke-linecap="round" />`,
  },
  {
    name: "Siri",
    art: svg`
      <circle cx="36" cy="36" r="33" fill="#e6e6ea" /><circle cx="36" cy="36" r="30" fill="url(#siri)" />
      <path d="M10 26q12-14 30-10 14 2 22 14-12-6-26 6-10-12-26-10z" fill="#d6338a" opacity=".6" />
      <path d="M8 42q14 4 28-6 12-4 26-14-2 14-22 18-8 12-22 14-6-2-10-12z" fill="#23b8c4" opacity=".5" />
      <path d="M34 14q3 12 2 22 14 8 28 10-18 0-28-10-4 14-22 20 14-10 22-20z" fill="#7df2ea" opacity=".7" />
      <path d="M36 36q8 10 6 29-6-8-6-29z" fill="#f56bb8" opacity=".8" />
      <path d="M24 44l9-8-6-8 9 5 7-8-3 10 9 3-10 1 2 10-5-8z" fill="#fff" opacity=".9" />`,
  },
  {
    name: "Calendar",
    art: svg`
      <g transform="rotate(-5 36 36)">
        <path d="M9 10l52-1 4 54-56 2z" fill="#596068" />
        <path d="M8 6h52v52H8z" fill="#f7f7f7" /><path d="M8 6h52v18H8z" fill="#e5453f" />
        <text x="34" y="20" font-size="14" fill="#fff" text-anchor="middle" font-family="Inter, sans-serif">DEC</text>
        <text x="34" y="51" font-size="30" fill="#222" text-anchor="middle" font-family="Inter, sans-serif" font-weight="300">14</text>
      </g>`,
  },
  {
    name: "Mail",
    art: svg`
      <g transform="rotate(-6 36 36)">
        <rect x="13" y="6" width="46" height="60" fill="#fff" stroke="#fff" stroke-width="3" stroke-dasharray="3 2" />
        <rect x="17" y="10" width="38" height="52" fill="#3a8bde" />
        <path d="M22 14q5 0 8 5 4 6 6 14l5 5q8 0 14 8-2 5-9 5l-8-2q-4 2-9-3-3-4-1-10-6-8-6-22z" fill="#7a5430" />
        <path d="M23 15q3 10 8 16l-4-3q-5-7-4-13zM42 42l11 5-8 2z" fill="#2c221c" />
        <path d="M30 34q6 4 8 12l-6 1q-4-6-2-13z" fill="#efe6d6" /><path d="M33 47l4 4-6-1z" fill="#eaa22e" />
      </g>
      <circle cx="57" cy="52" r="12" fill="none" stroke="#3a5670" stroke-width="1.5" opacity=".5" />
      <circle cx="57" cy="52" r="8" fill="none" stroke="#3a5670" opacity=".5" />`,
  },
  {
    name: "Chrome",
    running: true,
    art: svg`
      <circle cx="36" cy="36" r="33" fill="#ffcd46" />
      <path d="M7.400 19.500A33 33 0 0 1 64.600 19.500H36a16.500 16.500 0 0 0-16 20z" fill="#de5246" />
      <path d="M7.400 19.500A33 33 0 0 0 36 69l14-25a16.500 16.500 0 0 1-28 0z" fill="#1fa15d" />
      <circle cx="36" cy="36" r="15.5" fill="#f1f1f1" /><circle cx="36" cy="36" r="12.5" fill="#4a8af4" />`,
  },
  {
    name: "Launchpad",
    art: svg`
      <circle cx="36" cy="36" r="33" fill="url(#steel)" /><circle cx="36" cy="36" r="30.5" fill="none" stroke="#c9d3d9" stroke-width="1" />
      <path d="M56 16q-18 0-27 17l-12 4-5 8 11-2 7 8-3 10 8-6 4-12q16-9 17-27z" fill="#4c5055" />
      <circle cx="45" cy="28" r="4.5" fill="#a9b3b9" /><path d="M22 47q-7 2-6 11 8 0 10-7z" fill="#4c5055" />`,
  },
  {
    name: "Notes",
    art: svg`
      <g transform="rotate(-5 36 36)">
        <rect x="10" y="5" width="52" height="62" fill="#fbfbf8" /><rect x="10" y="5" width="52" height="14" fill="#fcd12a" />
        <path d="M10 25h52M10 31h52M10 37h52M10 43h52M10 49h52M10 55h52M10 61h52" stroke="#d0d0d0" />
      </g>`,
  },
  {
    name: "Reminders",
    art: svg`
      <g transform="rotate(-5 36 36)">
        <rect x="13" y="8" width="48" height="60" rx="4" fill="#333" /><rect x="12" y="5" width="48" height="60" rx="4" fill="#fafafa" />
        <circle cx="20" cy="18" r="4.5" fill="#3478f6" /><circle cx="20" cy="30" r="4.5" fill="#ea4b43" />
        <circle cx="20" cy="42" r="4.5" fill="#f19a37" /><circle cx="20" cy="54" r="4.5" fill="#5b626a" />
        <path d="M28 18h28M28 30h28M28 42h28M28 54h28" stroke="#888" />
      </g>`,
  },
  {
    name: "Messages",
    art: svg`
      <path d="M35 6c18 0 32 12 32 27S54 60 35 60q-5 0-10-1-5 6-13 6 5-5 4-10C8 50 3 42 3 33 3 18 17 6 35 6z" fill="url(#blue)" />
      <path d="M47 32c11 0 20 7 20 17q0 5-5 10 0 5 4 8-7 0-10-3-4 2-9 2-20-2-20-17 0-15 20-17z" fill="#e8f2fb" />
      <circle cx="38" cy="49" r="3" fill="#1e5fa8" /><circle cx="48" cy="49" r="3" fill="#1e5fa8" /><circle cx="58" cy="49" r="3" fill="#1e5fa8" />`,
  },
  {
    name: "FaceTime",
    art: svg`
      <rect x="3" y="8" width="58" height="52" rx="8" fill="url(#green)" />
      <rect x="11" y="21" width="30" height="26" rx="6" fill="#f4f4f4" /><path d="M43 32l11-9v22l-11-8z" fill="#f4f4f4" />
      <circle cx="53" cy="48" r="16" fill="#f2f2f2" />
      <path d="M45 39q3-3 5 1l1 4-2 2q2 5 5 7l3-1 4 3q1 4-4 4-12-4-12-20z" fill="#2fc84e" />`,
  },
  {
    name: "Pages",
    art: svg`
      <g transform="rotate(-5 36 36)">
        <rect x="9" y="5" width="50" height="62" fill="#f8f8f8" /><rect x="9" y="5" width="50" height="13" fill="#f58a1f" />
        <text x="12" y="15" font-size="8" fill="#fff" font-family="Inter, sans-serif">PAGES</text>
        <rect x="15" y="22" width="22" height="20" fill="#2b86d9" /><path d="M26 39q-9-6-6-12 4-3 6 1 4-4 7 0 1 6-7 11z" fill="#f58a1f" />
        <path d="M40 24h12M40 28h12M40 32h12M40 36h12M40 40h12M15 46h38M15 50h38M15 54h30M15 58h28" stroke="#777" />
      </g>
      <path d="M58 4l6 2-13 48-5 14v-12z" fill="#e88b2d" /><path d="M50 40l5 2-5 14-5 12 1-12z" fill="#444" />`,
  },
  {
    name: "App Store",
    badge: "1",
    art: svg`
      <circle cx="36" cy="36" r="33" fill="url(#blue)" /><circle cx="36" cy="36" r="32" fill="none" stroke="#1d5fd8" stroke-width="2" />
      <path d="M32 17L52 52M39 17L22 46M16 45h24M46 45h10M20 49l-3 4" stroke="#fff" stroke-width="6" stroke-linecap="round" fill="none" />`,
  },
  {
    name: "System Preferences",
    badge: "1",
    art: svg`
      <rect x="3" y="5" width="66" height="62" rx="4" fill="url(#steel)" /><circle cx="36" cy="36" r="27" fill="#2a2a2a" />
      ${teeth(30, 20, 25, "#b5b8ba", 2.5)}
      <circle cx="36" cy="36" r="18" fill="none" stroke="#9fa2a4" stroke-width="5" />
      <path d="M36 36h17M36 36l-9-15M36 36l-9 15" stroke="#b5b8ba" stroke-width="5" /><circle cx="36" cy="36" r="4" fill="#b5b8ba" />`,
  },
  {
    name: "Visual Studio Code",
    art: svg`
      <path d="M51 3L3 47v3l7 5 41-34z" fill="#1277bd" />
      <path d="M10 20l-7 5v3l48 41V52z" fill="#1f8ad2" />
      <path d="M51 3l17 8v50l-17 8z" fill="#35a6ee" />`,
  },
  {
    name: "Podcasts",
    art: svg`
      <circle cx="36" cy="36" r="33" fill="url(#purple)" /><circle cx="36" cy="36" r="32" fill="none" stroke="#7b2cb4" stroke-width="2" />
      <path d="M26 54a21 21 0 1 1 20 0M28 44a12.500 12.500 0 1 1 16 0" fill="none" stroke="#f3e6fa" stroke-width="3" />
      <circle cx="36" cy="33" r="5.5" fill="#f3e6fa" /><path d="M31 44q0-4 5-4t5 4l-2 15q-3 4-6 0z" fill="#f3e6fa" />`,
  },
  {
    name: "TV",
    art: svg`
      <circle cx="36" cy="36" r="33" fill="#333" /><circle cx="36" cy="36" r="30" fill="#101010" />
      <g transform="translate(13 24) scale(.88)"><path d=${APPLE_PATH} fill="#fff" /></g>
      <text x="33" y="45" font-size="25" fill="#fff" font-family="Inter, sans-serif" font-weight="500">tv</text>`,
  },
  {
    name: "Webex",
    art: svg`
      <circle cx="36" cy="36" r="33" fill="#fff" /><circle cx="36" cy="36" r="30.5" fill="#22bce9" />
      <path d="M50 16q2-5 7-2A30.500 30.500 0 0 1 17 60q-5-5-1-9 4-3 8 1 20 6 28-16 2-8-2-16z" fill="#0a4f6e" />
      <path d="M49 22q8 10 6 22-4 13-18 14-13 0-18-12 22 0 30-24z" fill="#70bf4d" />
      <path d="M36 16q13 0 13 10 0 22-20 25-12-1-12-15 2-18 19-20z" fill="#fff" />`,
  },
];

const pinned: DockApp[] = [
  {
    name: "Safari",
    running: true,
    art: svg`
      <circle cx="36" cy="36" r="33" fill="#f4f4f4" /><circle cx="36" cy="36" r="30.5" fill="url(#blue)" />
      ${teeth(48, 25, 29, "#d5ecfb", 1)}
      <path d="M55 17L32 32l8 8z" fill="#e8352c" /><path d="M17 55l15-23 8 8z" fill="#f2f2f2" />`,
  },
  {
    name: "Word",
    running: true,
    art: svg`
      <rect x="18" y="7" width="50" height="58" rx="3" fill="#154287" />
      <path d="M18 10q0-3 3-3h44q3 0 3 3v12H18z" fill="#41a1ea" /><path d="M18 22h50v14H18z" fill="#2b7cd3" /><path d="M18 36h50v15H18z" fill="#195abe" />
      <rect x="3" y="19" width="33" height="34" rx="3" fill="#1856b5" />
      <text x="19.5" y="45" font-size="24" fill="#fff" text-anchor="middle" font-family="Inter, sans-serif" font-weight="600">W</text>`,
  },
  {
    name: "Terminal",
    running: true,
    art: svg`
      <rect x="3" y="7" width="66" height="57" rx="3" fill="#c0c0c0" /><rect x="5" y="9" width="62" height="53" rx="1" fill="#0c0c0c" />
      <rect x="8" y="12" width="56" height="48" fill="#2a2a2a" />
      <text x="11" y="28" font-size="17" fill="#fff" font-family="Liberation Mono, monospace" font-weight="700">&gt;_</text>`,
  },
];

const trash: DockApp = {
  name: "Trash",
  art: svg`
    <path d="M10 9h52l-7 56q-2 4-19 4t-19-4z" fill="url(#bin)" />
    <ellipse cx="36" cy="11" rx="26" ry="6" fill="#6d7072" />
    <path d="M16 10l5-8 8 3 6-4 4 7 10-6 4 5 6 4q-8 6-22 7-14-1-21-8z" fill="#ecebe7" />
    <path d="M28 6l7 5-8 3zM42 7l8 3-7 3zM22 5l4 6-5-1z" fill="#6d6a66" /><path d="M31 8l5 4-5 2z" fill="#4fb3a0" /><path d="M48 4l6 4-5 2z" fill="#a84a3a" />`,
};

@customElement("app-dock")
export class AppDock extends LitElement {
  static styles = [
    reset,
    css`
      :host {
        display: flex;
        height: 98px;
        padding: 0 5px 0 4px;
        border: 2px solid rgba(190, 185, 175, 0.4);
        border-bottom: 0;
        border-radius: 12px 12px 0 0;
        background:
          radial-gradient(circle at 62% 120%, rgba(170, 160, 140, 0.5), transparent 45%),
          linear-gradient(90deg, #2b2626 0, #352d2b 18%, #5d5348 36%, #756b5c 58%, #695f54 78%, #4a423f 96%);
      }
      .defs {
        position: absolute;
        width: 0;
        height: 0;
      }
      .app {
        width: 80px;
        flex-direction: column;
        justify-content: flex-start;
        padding-top: 8px;
        gap: 4px;
        position: relative;
      }
      .dot {
        width: 8px;
        height: 8px;
        border-radius: 50%;
        background: #d8d2cc;
      }
      .badge {
        position: absolute;
        right: 2px;
        top: 5px;
        width: 28px;
        height: 28px;
        border-radius: 50%;
        background: #f5413d;
        color: #fff;
        font: 18px/28px Inter, sans-serif;
        text-align: center;
      }
      .sep {
        width: 36px;
        display: flex;
        justify-content: center;
        padding: 12px 0 16px;
      }
      .sep::before {
        content: "";
        width: 2px;
        background: #a39c92;
      }
    `,
  ];
  private item(a: DockApp) {
    return html`<button class="app" aria-label=${a.name}>
      <svg width="72" height="72" viewBox="0 0 72 72">${a.art}</svg>
      ${a.running ? html`<i class="dot"></i>` : nothing}
      ${a.badge ? html`<span class="badge">${a.badge}</span>` : nothing}
    </button>`;
  }
  private grad(id: string, from: string, to: string) {
    return svg`<linearGradient id=${id} x1="0" y1="0" x2="0" y2="1"><stop offset="0" stop-color=${from} /><stop offset="1" stop-color=${to} /></linearGradient>`;
  }
  render() {
    return html`
      <svg class="defs">
        <defs>
          ${this.grad("finder", "#2ccbfb", "#2b7df3")} ${this.grad("blue", "#37c3fb", "#1d66f0")}
          ${this.grad("green", "#41e86f", "#1fc23f")} ${this.grad("steel", "#cfdde3", "#7f8589")}
          ${this.grad("purple", "#cf6cf4", "#8a2fc4")} ${this.grad("siri", "#5c1a5c", "#0f2a50")}
          <linearGradient id="bin">
            <stop offset="0" stop-color="#b5b8ba" /><stop offset=".3" stop-color="#74787b" />
            <stop offset=".7" stop-color="#8b8f92" /><stop offset="1" stop-color="#a9acae" />
          </linearGradient>
        </defs>
      </svg>
      ${apps.map((a) => this.item(a))}
      <i class="sep"></i>
      ${pinned.map((a) => this.item(a))}
      <i class="sep"></i>
      ${this.item(trash)}
    `;
  }
}

/* ---------- Terminal window ---------- */

@customElement("terminal-window")
export class TerminalWindow extends LitElement {
  @property() heading = "";
  static styles = [
    reset,
    css`
      :host {
        display: flex;
        flex-direction: column;
        overflow: hidden;
        border: 1px solid #000;
        border-radius: 10px;
        background: #1e1e1e;
        box-shadow: 0 20px 50px rgba(0, 0, 0, 0.5), inset 0 0 0 2px #4c4c4c;
      }
      .title {
        height: 44px;
        border-bottom: 1px solid #000;
        box-shadow: inset 0 2px 0 #5c5c5a;
        background: #333230;
        color: #7c7b79;
        font: 25px/46px Inter, sans-serif;
        text-align: right;
        padding-right: 18px;
      }
    `,
  ];
  render() {
    return html`<div class="title">${this.heading}</div>`;
  }
}

/* ---------- Desktop ---------- */

@customElement("app-root")
export class AppRoot extends LitElement {
  static styles = [
    reset,
    css`
      :host {
        display: flex;
        flex-direction: column;
        position: relative;
        min-height: 100vh;
        overflow: hidden;
        background: #2b2826;
      }
      .wood {
        position: absolute;
        left: 0;
        bottom: 0;
        width: 100%;
        height: 110px;
      }
      .desk {
        flex: 1;
        position: relative;
      }
      .back {
        position: absolute;
        inset: 1px 0 98px;
      }
      .term {
        position: absolute;
        top: 312px;
        right: 75px;
        width: 600px;
        height: 732px;
      }
      .front {
        position: absolute;
        inset: 1px 329px 98px 251px;
      }
      .dock {
        position: absolute;
        bottom: 0;
        left: 50%;
        transform: translateX(-50%);
      }
    `,
  ];
  render() {
    return html`
      <svg class="wood">
        <defs>
          <filter id="grain" x="0" y="0" width="100%" height="100%" color-interpolation-filters="sRGB">
            <feTurbulence type="fractalNoise" baseFrequency=".03 .35" numOctaves="4" seed="7" />
            <feColorMatrix values="1 0 0 0 -.22  .95 0 0 0 -.22  .85 0 0 0 -.2  0 0 0 0 1" />
          </filter>
          <linearGradient id="shade" x1="0" y1="0" x2="0" y2="1">
            <stop offset="0" stop-color="#1c1a1a" stop-opacity=".95" />
            <stop offset=".3" stop-color="#1c1a1a" stop-opacity=".75" />
            <stop offset=".6" stop-color="#1c1a1a" stop-opacity=".15" />
            <stop offset="1" stop-color="#1c1a1a" stop-opacity=".1" />
          </linearGradient>
          <linearGradient id="side">
            <stop offset="0" stop-color="#1c1a1a" stop-opacity=".3" />
            <stop offset=".2" stop-color="#1c1a1a" stop-opacity=".5" />
            <stop offset=".8" stop-color="#1c1a1a" stop-opacity="0" />
          </linearGradient>
        </defs>
        <rect width="100%" height="100%" filter="url(#grain)" />
        <rect width="100%" height="100%" fill="url(#shade)" />
        <rect width="100%" height="100%" fill="url(#side)" />
      </svg>
      <menu-bar></menu-bar>
      <div class="desk">
        <chrome-window class="back"></chrome-window>
        <terminal-window class="term" heading="0vx7qsp1h0000gn/..."></terminal-window>
        <safari-window class="front"></safari-window>
        <app-dock class="dock"></app-dock>
      </div>
    `;
  }
}
